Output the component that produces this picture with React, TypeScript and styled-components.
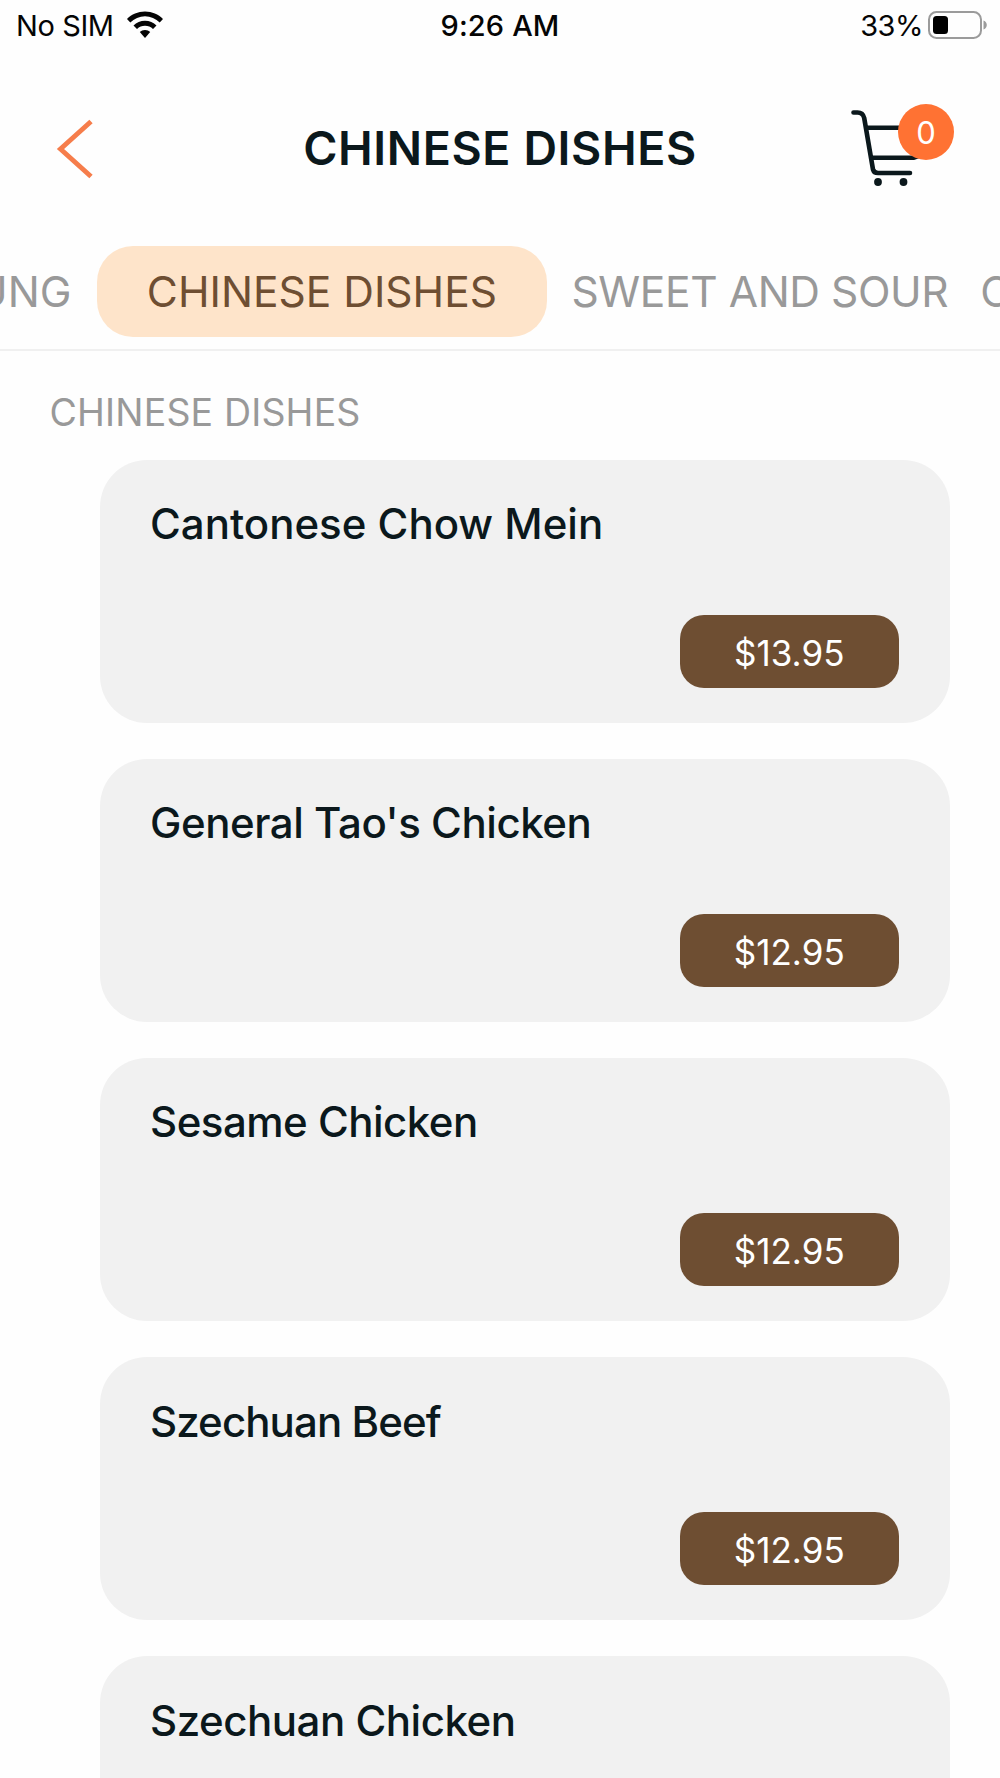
import React from "react";
import styled, { createGlobalStyle } from "styled-components";

const GlobalStyle = createGlobalStyle`
  * { box-sizing: border-box; }
  html, body { margin: 0; padding: 0; }
  body {
    width: 1000px;
    height: 1778px;
    overflow: hidden;
    background: #fefefe;
    font-family: "Inter", "Liberation Sans", sans-serif;
  }
`;

const INK = "#0b181c";
const ORANGE = "#ff7233";
const BROWN = "#6e4e32";

const Screen = styled.main`
  width: 1000px;
  height: 1778px;
  overflow: hidden;
  display: flex;
  flex-direction: column;
  background: #fefefe;
`;

const StatusBar = styled.div`
  display: grid;
  grid-template-columns: 1fr auto 1fr;
  align-items: center;
  height: 50px;
  padding: 0 13px 0 16px;
  color: #050505;
  flex: none;
`;

const StatusGroup = styled.div<{ $end?: boolean; $gap: number }>`
  display: flex;
  align-items: center;
  gap: ${(p) => p.$gap}px;
  justify-content: ${(p) => (p.$end ? "flex-end" : "flex-start")};
`;

const StatusText = styled.span<{ $weight?: number; $tracking?: number }>`
  padding-top: 1px;
  font-size: 29px;
  line-height: 36px;
  font-weight: ${(p) => p.$weight ?? 400};
  letter-spacing: ${(p) => p.$tracking ?? 0}px;
  white-space: nowrap;
`;

const Clock = styled(StatusText)`
  margin-right: 3px;
`;

const Header = styled.header`
  display: grid;
  grid-template-columns: 145px 1fr 145px;
  align-items: center;
  height: 195px;
  flex: none;
`;

const BackButton = styled.button`
  justify-self: start;
  margin: 2px 0 0 56px;
  padding: 0;
  border: 0;
  background: none;
  line-height: 0;
`;

const Title = styled.h1`
  margin: 0;
  text-align: center;
  color: ${INK};
  font-size: 46.5px;
  line-height: 56px;
  font-weight: 600;
  letter-spacing: 0.6px;
  white-space: nowrap;
`;

const CartButton = styled.button`
  position: relative;
  justify-self: end;
  width: 106px;
  height: 86px;
  margin: 0 44px 1px 0;
  padding: 0;
  border: 0;
  background: none;
  line-height: 0;
`;

const CartBadge = styled.span`
  position: absolute;
  top: 0;
  right: 2px;
  width: 56px;
  height: 56px;
  border-radius: 50%;
  background: ${ORANGE};
  color: #fff;
  font: 400 31px/57px "Inter", sans-serif;
  text-align: center;
`;

const Tabs = styled.nav`
  display: flex;
  align-items: center;
  height: 106px;
  padding-bottom: 12px;
  border-bottom: 2px solid #f0f0f0;
  overflow: hidden;
  flex: none;
`;

const Tab = styled.a<{ $active?: boolean; $tracking?: number; $start?: number }>`
  flex: none;
  display: flex;
  align-items: center;
  height: 91px;
  margin-right: ${(p) => (p.$active ? 9 : 0)}px;
  margin-left: ${(p) => p.$start ?? 0}px;
  padding: 1px ${(p) => (p.$active ? 49.5 : 16)}px 0;
  border-radius: 36px;
  background: ${(p) => (p.$active ? "#fee4ca" : "transparent")};
  color: ${(p) => (p.$active ? BROWN : "#999")};
  font-size: 42.5px;
  font-weight: 400;
  letter-spacing: ${(p) => p.$tracking ?? 0}px;
  white-space: nowrap;
`;

const SectionTitle = styled.h2`
  margin: 0;
  padding: 36.5px 0 0 49.5px;
  height: 109px;
  color: #999;
  font-size: 37.5px;
  line-height: 50px;
  font-weight: 400;
  letter-spacing: 0.15px;
  flex: none;
`;

const DishList = styled.section`
  display: flex;
  flex-direction: column;
  gap: 36.05px;
  padding: 0 50px 0 100px;
`;

const DishCard = styled.article`
  display: flex;
  flex-direction: column;
  justify-content: space-between;
  flex: none;
  height: 263px;
  padding: 38.4px 51px 35.4px 50px;
  border-radius: 47px;
  background: #f1f1f1;
`;

const DishName = styled.h3<{ $tracking: number }>`
  margin: 0;
  color: ${INK};
  font-size: 42px;
  line-height: 52px;
  font-weight: 500;
  letter-spacing: ${(p) => p.$tracking}px;
  white-space: nowrap;
`;

const Price = styled.button`
  align-self: flex-end;
  width: 219.5px;
  height: 73px;
  padding: 3px 0 0;
  border: 0;
  border-radius: 24px;
  background: ${BROWN};
  color: #fff;
  font: 400 35px/42px "Inter", sans-serif;
  text-align: center;
`;

const WifiIcon = () => (
  <svg width="38" height="28" viewBox="0 0 38 28">
    <path d="M19 0.6c7 0 13.400 2.800 18 7.400l-3.300 3.500a20.500 20.500 0 0 0-29.400 0L1 8C5.600 3.400 12 .600 19 .600z" fill="#050505" />
    <path d="M19 9.800c4.500 0 8.500 1.700 11.500 4.600l-3.500 3.600a11.500 11.500 0 0 0-16 0l-3.500-3.600c3-2.900 7-4.600 11.500-4.600z" fill="#050505" />
    <path d="M19 18.900c2 0 3.900.8 5.200 2.100L19 27l-5.200-6c1.300-1.300 3.200-2.100 5.200-2.100z" fill="#050505" />
  </svg>
);

const BatteryIcon = () => (
  <svg width="59" height="28" viewBox="0 0 59 28">
    <rect x="1" y="1" width="52" height="26" rx="7.500" fill="none" stroke="#9b9b9b" strokeWidth="2" />
    <rect x="5" y="5" width="15" height="18" rx="3.500" fill="#000" />
    <path d="M55.500 9.500c2.400 1 3.300 2.700 3.300 4.500s-.9 3.500-3.300 4.500z" fill="#9b9b9b" />
  </svg>
);

const BackIcon = () => (
  <svg width="38" height="60" viewBox="0 0 38 60">
    <path d="M35 2.500L4.500 30L35 57.500" fill="none" stroke="#f67d4b" strokeWidth="4.900" />
  </svg>
);

const CartIcon = () => (
  <svg width="106" height="86" viewBox="0 0 106 86">
    <g fill="none" stroke={INK} strokeWidth="4.600" strokeLinecap="round" strokeLinejoin="round">
      <path d="M3.500 8.500H7.500Q13 8.500 14.200 14L23 65.500Q24 69 28 69H60" />
      <path d="M17 23.800H60M22 53.700H64L74 50" />
    </g>
    <circle cx="28" cy="78" r="3.900" fill={INK} />
    <circle cx="53.500" cy="78" r="3.900" fill={INK} />
  </svg>
);

const dishes = [
  { name: "Cantonese Chow Mein", price: "$13.95", tracking: 0 },
  { name: "General Tao's Chicken", price: "$12.95", tracking: -0.45 },
  { name: "Sesame Chicken", price: "$12.95", tracking: -0.5 },
  { name: "Szechuan Beef", price: "$12.95", tracking: -0.9 },
  { name: "Szechuan Chicken", price: "$12.95", tracking: -0.47 },
];

export default function App() {
  return (
    <Screen>
      <GlobalStyle />
      <StatusBar>
        <StatusGroup $gap={12}>
          <StatusText $tracking={-0.4}>No SIM</StatusText>
          <WifiIcon />
        </StatusGroup>
        <Clock $weight={500} $tracking={0.15}>9:26 AM</Clock>
        <StatusGroup $gap={5} $end>
          <StatusText $tracking={-0.5}>33%</StatusText>
          <BatteryIcon />
        </StatusGroup>
      </StatusBar>
      <Header>
        <BackButton aria-label="Back">
          <BackIcon />
        </BackButton>
        <Title>CHINESE DISHES</Title>
        <CartButton aria-label="Cart">
          <CartIcon />
          <CartBadge>0</CartBadge>
        </CartButton>
      </Header>
      <Tabs>
        <Tab $start={-40}>UNG</Tab>
        <Tab $active $start={10}>CHINESE DISHES</Tab>
        <Tab $tracking={-0.4}>SWEET AND SOUR</Tab>
        <Tab>C</Tab>
      </Tabs>
      <SectionTitle>CHINESE DISHES</SectionTitle>
      <DishList>
        {dishes.map((dish) => (
          <DishCard key={dish.name}>
            <DishName $tracking={dish.tracking}>{dish.name}</DishName>
            <Price>{dish.price}</Price>
          </DishCard>
        ))}
      </DishList>
    </Screen>
  );
}
